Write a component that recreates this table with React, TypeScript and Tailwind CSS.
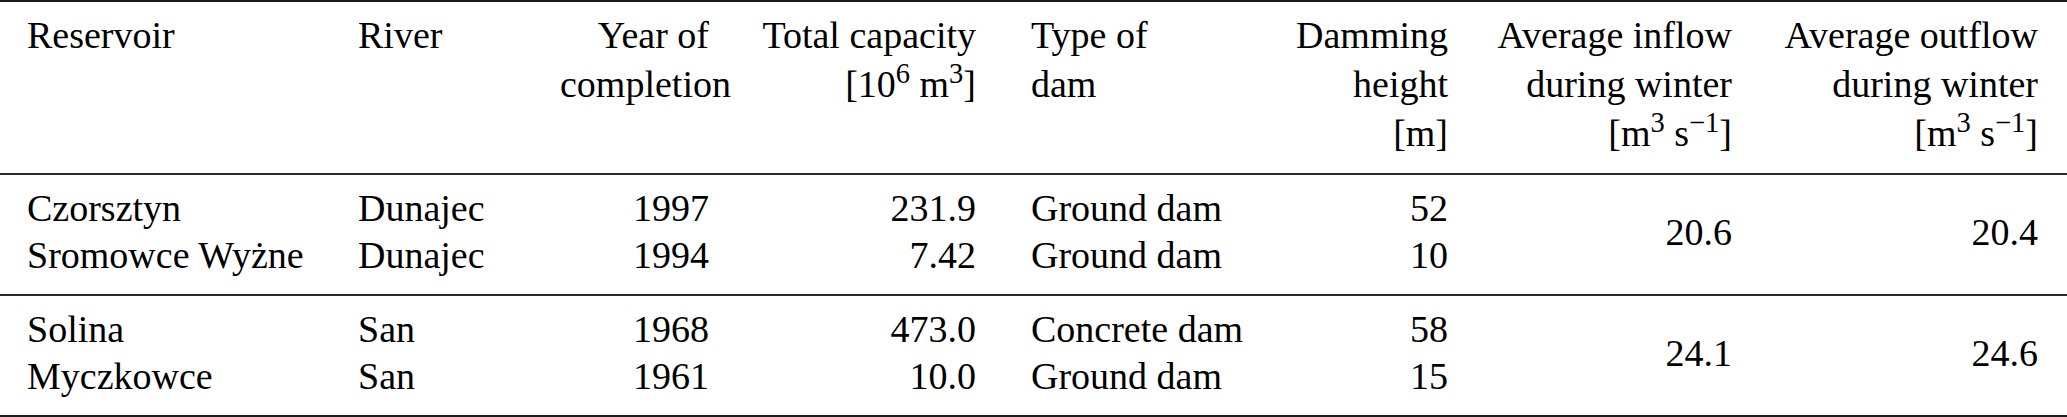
const cols = "grid grid-cols-[331px_202px_149px_267px_274px_198px_284px_306px]";

type Row = {
  name: string;
  river: string;
  year: string;
  capacity: string;
  type: string;
  height: string;
};

const groups: { rows: Row[]; inflow: string; outflow: string }[] = [
  {
    rows: [
      { name: "Czorsztyn", river: "Dunajec", year: "1997", capacity: "231.9", type: "Ground dam", height: "52" },
      { name: "Sromowce Wyżne", river: "Dunajec", year: "1994", capacity: "7.42", type: "Ground dam", height: "10" },
    ],
    inflow: "20.6",
    outflow: "20.4",
  },
  {
    rows: [
      { name: "Solina", river: "San", year: "1968", capacity: "473.0", type: "Concrete dam", height: "58" },
      { name: "Myczkowce", river: "San", year: "1961", capacity: "10.0", type: "Ground dam", height: "15" },
    ],
    inflow: "24.1",
    outflow: "24.6",
  },
];

const Flow = () => (
  <>
    [m<sup>3</sup> s<sup>−1</sup>]
  </>
);

const App = () => {
  return (
    <div
      className="w-[2067px] bg-white text-black font-[Liberation_Serif] text-[38px] whitespace-nowrap"
      style={{ fontFamily: '"Liberation Serif", "Times New Roman", serif' }}
    >
      <div className="border-t-2 border-b-2 border-[#1c1c1c]">
        {/* header */}
        <div className={`${cols} pl-[27px] pt-[9px] pb-[15px] leading-[49px] border-b-2 border-[#2a2a2a]`}>
          <div>Reservoir</div>
          <div>River</div>
          <div className="text-right">
            Year of
            <br />
            completion
          </div>
          <div className="text-right">
            Total capacity
            <br />
            [10<sup>6</sup> m<sup>3</sup>]
          </div>
          <div className="pl-[55px]">
            Type of
            <br />
            dam
          </div>
          <div className="text-right">
            Damming
            <br />
            height
            <br />
            [m]
          </div>
          <div className="text-right">
            Average inflow
            <br />
            during winter
            <br />
            <Flow />
          </div>
          <div className="text-right">
            Average outflow
            <br />
            during winter
            <br />
            <Flow />
          </div>
        </div>

        {groups.map((g, gi) => (
          <div
            key={gi}
            className={`${cols} grid-rows-[47px_47px] pl-[27px] pt-[10px] pb-[15px] leading-[47px] ${gi === 0 ? "border-b-2 border-[#2a2a2a]" : ""}`}
          >
            {g.rows.map((r, ri) => (
              <div key={ri} className="contents">
                <div className="col-start-1" style={{ gridRow: ri + 1 }}>{r.name}</div>
                <div className="col-start-2" style={{ gridRow: ri + 1 }}>{r.river}</div>
                <div className="col-start-3 text-right" style={{ gridRow: ri + 1 }}>{r.year}</div>
                <div className="col-start-4 text-right" style={{ gridRow: ri + 1 }}>{r.capacity}</div>
                <div className="col-start-5 pl-[55px]" style={{ gridRow: ri + 1 }}>{r.type}</div>
                <div className="col-start-6 text-right" style={{ gridRow: ri + 1 }}>{r.height}</div>
              </div>
            ))}
            <div className="col-start-7 row-start-1 row-span-2 self-center text-right">{g.inflow}</div>
            <div className="col-start-8 row-start-1 row-span-2 self-center text-right">{g.outflow}</div>
          </div>
        ))}
      </div>
    </div>
  );
};

export default App;
